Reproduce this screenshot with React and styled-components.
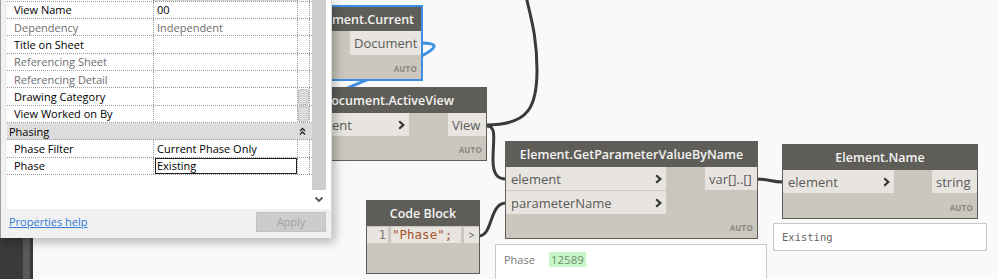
import React from 'react';
import styled, { createGlobalStyle } from 'styled-components';

const GlobalStyle = createGlobalStyle`
  html, body { margin: 0; padding: 0; background: #f9f9f9; overflow: hidden; }
  #root { width: 997px; height: 279px; }
`;

const Canvas = styled.div`
  position: relative;
  width: 997px;
  height: 279px;
  overflow: hidden;
  background: #f9f9f9;
  font-family: "Open Sans", sans-serif;
`;

const RevitStrip = styled.div`
  position: absolute;
  left: 0;
  top: 0;
  bottom: 0;
  width: 33px;
  background: #3a3a3a;
  display: flex;
  justify-content: flex-end;
`;

const StripBar = styled.div`
  width: 7px;
  margin-right: 3px;
  background: #595959;
`;

const WireLayer = styled.svg`
  position: absolute;
  left: 0;
  top: 0;
  width: 997px;
  height: 279px;
  overflow: visible;
`;

/* ---------- Dynamo nodes ---------- */

const NodeBox = styled.div`
  position: absolute;
  left: ${p => p.$x}px;
  top: ${p => p.$y}px;
  width: ${p => p.$w}px;
  height: ${p => p.$h}px;
  box-sizing: border-box;
  background: #cbc7bf;
  border: ${p => (p.$selected ? '2px solid #3d8fe3' : '1px solid #5f5d58')};
  display: flex;
  flex-direction: column;
`;

const NodeTitle = styled.div`
  flex: 0 0 ${p => p.$h || 25}px;
  background: #5f5d58;
  color: #f4f4f2;
  font-weight: 600;
  font-size: 12.5px;
  display: flex;
  align-items: center;
  justify-content: center;
  white-space: nowrap;
  overflow: hidden;
`;

const PortArea = styled.div`
  display: flex;
  justify-content: space-between;
  align-items: flex-start;
`;

const PortColumn = styled.div`
  display: flex;
  flex-direction: column;
  gap: 1px;
  width: ${p => (p.$w ? `${p.$w}px` : 'auto')};
`;

const Port = styled.div`
  height: ${p => p.$h || 23}px;
  box-sizing: border-box;
  background: #e8e5e0;
  display: flex;
  align-items: center;
  justify-content: space-between;
  padding: 0 ${p => (p.$out ? '3px' : '4px')} 0 ${p => (p.$out ? '4px' : `${p.$pl ?? 5}px`)};
  color: #5a5a5a;
  font-size: 13px;
  white-space: nowrap;
  overflow: hidden;
  width: ${p => (p.$w ? `${p.$w}px` : 'auto')};
`;

const AutoLabel = styled.div`
  margin-top: auto;
  text-align: right;
  padding: 0 4px 5px 0;
  font-size: 8px;
  font-weight: 700;
  color: #8a867e;
  letter-spacing: 0.2px;
`;

const Chevron = () => (
  <svg width="7" height="10" viewBox="0 0 7 10">
    <path d="M1.2 1.2 L5.3 5 L1.2 8.8" fill="none" stroke="#353535" strokeWidth="2.2" />
  </svg>
);

const CodeRow = styled.div`
  display: flex;
  gap: 3px;
  margin-top: 1px;
  height: 16px;
`;

const LineNo = styled.div`
  width: 21px;
  background: #e8e5e0;
  font-family: "DejaVu Sans Mono", monospace;
  font-size: 12px;
  color: #777;
  text-align: right;
  padding-right: 2px;
  box-sizing: border-box;
  line-height: 16px;
`;

const CodeText = styled.div`
  width: 69px;
  background: #e8e5e0;
  font-family: "DejaVu Sans Mono", monospace;
  font-size: 12.5px;
  color: #a9552f;
  line-height: 16px;
  padding-left: 1px;
  white-space: nowrap;
`;

const CodeOut = styled.div`
  width: 15px;
  background: #e8e5e0;
  color: #555;
  font-size: 10px;
  line-height: 16px;
  text-align: center;
`;

const Preview = styled.div`
  position: absolute;
  left: ${p => p.$x}px;
  top: ${p => p.$y}px;
  width: ${p => p.$w}px;
  height: ${p => p.$h}px;
  box-sizing: border-box;
  background: #ffffff;
  border: 1px solid #c9c9c9;
  display: flex;
  align-items: ${p => (p.$top ? 'flex-start' : 'center')};
  padding: ${p => (p.$top ? '7px 0 0 8px' : '0 0 0 8px')};
  gap: 14px;
`;

const PreviewLabel = styled.span`
  font-size: 11px;
  color: #777;
  line-height: 15px;
`;

const PreviewValue = styled.span`
  font-size: 11.5px;
  color: #6d8f6d;
  background: #c8f6c8;
  line-height: 15px;
  padding: 0 2px;
`;

const PreviewMono = styled.span`
  font-family: "DejaVu Sans Mono", monospace;
  font-size: 10.5px;
  color: #666;
`;

/* ---------- Revit properties panel ---------- */

const Panel = styled.div`
  position: absolute;
  left: 0;
  top: 0;
  width: 332px;
  height: 238px;
  box-sizing: border-box;
  background: #f0f0f0;
  border-left: 1px solid #a0a0a0;
  border-right: 1px solid #d8d8d8;
  box-shadow: 3px 4px 10px rgba(0, 0, 0, 0.28);
  display: flex;
  flex-direction: column;
  font-family: "Open Sans", sans-serif;
  font-size: 11px;
  color: #000;
`;

const PanelBody = styled.div`
  display: flex;
  height: 209px;
  margin-left: 6px;
  background: #ffffff;
`;

const Grid = styled.div`
  width: 305px;
  display: flex;
  flex-direction: column;
`;

const Row = styled.div`
  display: flex;
  height: ${p => p.$h || 17.35}px;
  box-sizing: border-box;
  border-bottom: 1px dotted #9c9c9c;
  background: ${p => (p.$group ? '#dcdcdc' : 'transparent')};
  align-items: stretch;
  flex: 0 0 auto;
`;

const NameCell = styled.div`
  width: 147px;
  box-sizing: border-box;
  border-right: 1px dotted #9c9c9c;
  padding-left: 7px;
  display: flex;
  align-items: center;
  color: ${p => (p.$dim ? '#6e6e6e' : '#000')};
  white-space: nowrap;
`;

const ValueCell = styled.div`
  width: 144px;
  box-sizing: border-box;
  border-right: 1px dotted #9c9c9c;
  padding-left: 3px;
  display: flex;
  align-items: center;
  color: ${p => (p.$dim ? '#6e6e6e' : '#000')};
  background: ${p => (p.$shade ? '#d4d4d4' : 'transparent')};
  white-space: nowrap;
`;

const EditBox = styled.div`
  flex: 1;
  align-self: stretch;
  margin-left: -2px;
  border: 1px solid #222;
  padding-left: 1px;
  display: flex;
  align-items: center;
`;

const ExtraCell = styled.div`
  width: 12px;
  box-sizing: border-box;
  border-right: 1px dotted #9c9c9c;
  display: flex;
  align-items: center;
  justify-content: center;
`;

const MiniButton = styled.div`
  width: 9px;
  height: 14px;
  background: #dadada;
  border: 1px solid #c4c4c4;
  border-radius: 2px;
`;

const GroupTitle = styled.div`
  flex: 1;
  padding-left: 2px;
  display: flex;
  align-items: center;
  justify-content: space-between;
  padding-right: 6px;
`;

const ScrollTrack = styled.div`
  width: 19px;
  display: flex;
  flex-direction: column;
  align-items: flex-start;
`;

const ScrollThumb = styled.div`
  width: 14px;
  height: 190px;
  background: #cdcdcd;
`;

const ScrollArrow = styled.div`
  width: 14px;
  height: 19px;
  display: flex;
  align-items: center;
  justify-content: center;
`;

const PanelFooter = styled.div`
  flex: 1;
  display: flex;
  align-items: center;
  justify-content: space-between;
  padding: 0 5px 4px 8px;
`;

const HelpLink = styled.span`
  color: #2f7bd9;
  text-decoration: underline;
  font-size: 11px;
`;

const ApplyButton = styled.div`
  width: 70px;
  height: 20px;
  box-sizing: border-box;
  background: #cccccc;
  border: 1px solid #c2c2c2;
  color: #a3a3a3;
  font-size: 11px;
  display: flex;
  align-items: center;
  justify-content: center;
`;

const rows = [
  { name: 'View Name', value: '00' },
  { name: 'Dependency', value: 'Independent', dim: true },
  { name: 'Title on Sheet', value: '' },
  { name: 'Referencing Sheet', value: '', dim: true },
  { name: 'Referencing Detail', value: '', dim: true },
  { name: 'Drawing Category', value: '', btn: true },
  { name: 'View Worked on By', value: '', btn: true },
];

const DoubleUp = () => (
  <svg width="7" height="9" viewBox="0 0 7 9">
    <path d="M1 4 L3.5 1.5 L6 4 M1 7.5 L3.5 5 L6 7.5" fill="none" stroke="#222" strokeWidth="1.3" />
  </svg>
);

const DownChevron = () => (
  <svg width="10" height="7" viewBox="0 0 10 7">
    <path d="M1.5 1.5 L5 5 L8.5 1.5" fill="none" stroke="#555" strokeWidth="1.8" />
  </svg>
);

function PropertiesPanel() {
  return (
    <Panel>
      <PanelBody>
        <Grid>
          <Row $h={1.7}>
            <NameCell />
            <ValueCell $shade />
            <ExtraCell />
          </Row>
          {rows.map(r => (
            <Row key={r.name}>
              <NameCell $dim={r.dim}>{r.name}</NameCell>
              <ValueCell $dim={r.dim}>{r.value}</ValueCell>
              <ExtraCell>{r.btn && <MiniButton />}</ExtraCell>
            </Row>
          ))}
          <Row $group>
            <GroupTitle>
              <span>Phasing</span>
              <DoubleUp />
            </GroupTitle>
          </Row>
          <Row>
            <NameCell>Phase Filter</NameCell>
            <ValueCell>Current Phase Only</ValueCell>
            <ExtraCell />
          </Row>
          <Row>
            <NameCell>Phase</NameCell>
            <ValueCell>
              <EditBox>Existing</EditBox>
            </ValueCell>
            <ExtraCell />
          </Row>
        </Grid>
        <ScrollTrack>
          <ScrollThumb />
          <ScrollArrow>
            <DownChevron />
          </ScrollArrow>
        </ScrollTrack>
      </PanelBody>
      <PanelFooter>
        <HelpLink>Properties help</HelpLink>
        <ApplyButton>Apply</ApplyButton>
      </PanelFooter>
    </Panel>
  );
}

function Wires() {
  return (
    <WireLayer viewBox="0 0 997 279">
      <g fill="none" strokeLinecap="round">
        <path d="M421 43 C492 43, 250 112, 300 126" stroke="#3d8fe3" strokeWidth="3" />
        <path d="M487 125 C530 125, 537 105, 537 70 C537 35, 530 15, 526 -4" stroke="#3a3a3a" strokeWidth="3" />
        <path d="M487 126 C497 126, 493 140, 493 160 C493 175, 498 179, 506 179" stroke="#3a3a3a" strokeWidth="3" />
        <path d="M479 236 C493 236, 489 203, 506 203" stroke="#3a3a3a" strokeWidth="3" />
        <path d="M757 179 C770 179, 770 182, 783 182" stroke="#3a3a3a" strokeWidth="3" />
      </g>
    </WireLayer>
  );
}

export default function App() {
  return (
    <>
      <GlobalStyle />
      <Canvas>
        <RevitStrip>
          <StripBar />
        </RevitStrip>
        <Wires />

        <NodeBox $x={292} $y={5} $w={131} $h={76} $selected>
          <NodeTitle $h={24}>Document.Current</NodeTitle>
          <PortArea>
            <PortColumn />
            <PortColumn>
              <Port $out $w={71} $h={24}>Document</Port>
            </PortColumn>
          </PortArea>
          <AutoLabel>AUTO</AutoLabel>
        </NodeBox>

        <NodeBox $x={289} $y={87} $w={198} $h={74}>
          <NodeTitle>Document.ActiveView</NodeTitle>
          <PortArea>
            <PortColumn $w={119}>
              <Port $pl={0}>
                document
                <Chevron />
              </Port>
            </PortColumn>
            <PortColumn>
              <Port $out $w={38}>View</Port>
            </PortColumn>
          </PortArea>
          <AutoLabel>AUTO</AutoLabel>
        </NodeBox>

        <NodeBox $x={505} $y={141} $w={253} $h={98}>
          <NodeTitle>Element.GetParameterValueByName</NodeTitle>
          <PortArea>
            <PortColumn $w={160}>
              <Port>
                element
                <Chevron />
              </Port>
              <Port>
                parameterName
                <Chevron />
              </Port>
            </PortColumn>
            <PortColumn>
              <Port $out $w={52}>var[]..[]</Port>
            </PortColumn>
          </PortArea>
          <AutoLabel>AUTO</AutoLabel>
        </NodeBox>

        <NodeBox $x={366} $y={200} $w={114} $h={74}>
          <NodeTitle>Code Block</NodeTitle>
          <CodeRow>
            <LineNo>1</LineNo>
            <CodeText>"Phase";</CodeText>
            <CodeOut>&gt;</CodeOut>
          </CodeRow>
        </NodeBox>

        <NodeBox $x={782} $y={144} $w={196} $h={75}>
          <NodeTitle>Element.Name</NodeTitle>
          <PortArea>
            <PortColumn $w={111}>
              <Port>
                element
                <Chevron />
              </Port>
            </PortColumn>
            <PortColumn>
              <Port $out $w={45}>string</Port>
            </PortColumn>
          </PortArea>
          <AutoLabel>AUTO</AutoLabel>
        </NodeBox>

        <Preview $x={495} $y={244} $w={272} $h={40} $top>
          <PreviewLabel>Phase</PreviewLabel>
          <PreviewValue>12589</PreviewValue>
        </Preview>

        <Preview $x={773} $y={223} $w={214} $h={28}>
          <PreviewMono>Existing</PreviewMono>
        </Preview>

        <PropertiesPanel />
      </Canvas>
    </>
  );
}
